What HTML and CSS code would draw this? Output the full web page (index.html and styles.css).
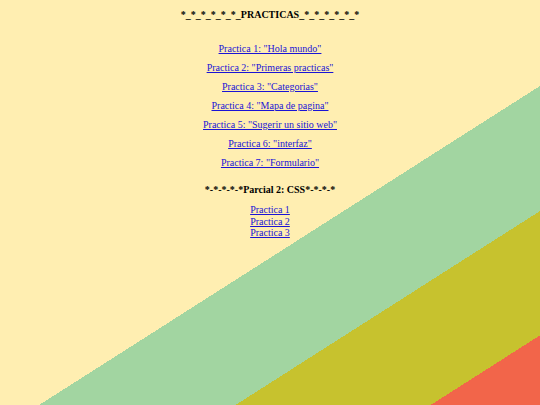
FILE: index.html
```html
<!DOCTYPE html>
<html lang="es">
<head>
<meta charset="utf-8">
<title>Practicas</title>
<link rel="stylesheet" href="styles.css">
</head>
<body>
<div class="page">
  <main class="content">
    <div class="title">*_*_*_*_*_*_PRACTICAS_*_*_*_*_*_*</div>
    <nav class="practicas">
      <a href="#">Practica 1: "Hola mundo"</a>
      <a href="#">Practica 2: "Primeras practicas"</a>
      <a href="#">Practica 3: "Categorias"</a>
      <a href="#">Practica 4: "Mapa de pagina"</a>
      <a href="#">Practica 5: "Sugerir un sitio web"</a>
      <a href="#">Practica 6: "interfaz"</a>
      <a href="#">Practica 7: "Formulario"</a>
    </nav>
    <div class="subtitle">*-*-*-*-*Parcial 2: CSS*-*-*-*</div>
    <nav class="parcial">
      <a href="#">Practica 1</a>
      <a href="#">Practica 2</a>
      <a href="#">Practica 3</a>
    </nav>
  </main>
</div>
</body>
</html>
```

FILE: styles.css
```css
html, body {
  margin: 0;
  padding: 0;
}

.page {
  min-height: 100vh;
  box-sizing: border-box;
  background: linear-gradient(147.5deg,
    #ffeeb1 0 57.4%,
    #a2d5a1 57.4% 74.1%,
    #c7c22e 74.1% 90.7%,
    #f2654a 90.7% 100%);
  font-family: "Liberation Serif", "Times New Roman", serif;
  font-size: 10px;
  line-height: 11.4px;
  color: #000;
}

.content {
  display: flex;
  flex-direction: column;
  align-items: center;
  padding-top: 9.4px;
  text-align: center;
}

.title,
.subtitle {
  font-weight: bold;
}

.practicas {
  display: flex;
  flex-direction: column;
  align-items: center;
  gap: 7.6px;
  margin-top: 22.1px;
}

.subtitle {
  margin-top: 15.3px;
}

.parcial {
  display: flex;
  flex-direction: column;
  align-items: center;
  margin-top: 9.2px;
}

.practicas a,
.parcial a {
  color: #1a14d6;
  text-decoration: underline;
}
```
